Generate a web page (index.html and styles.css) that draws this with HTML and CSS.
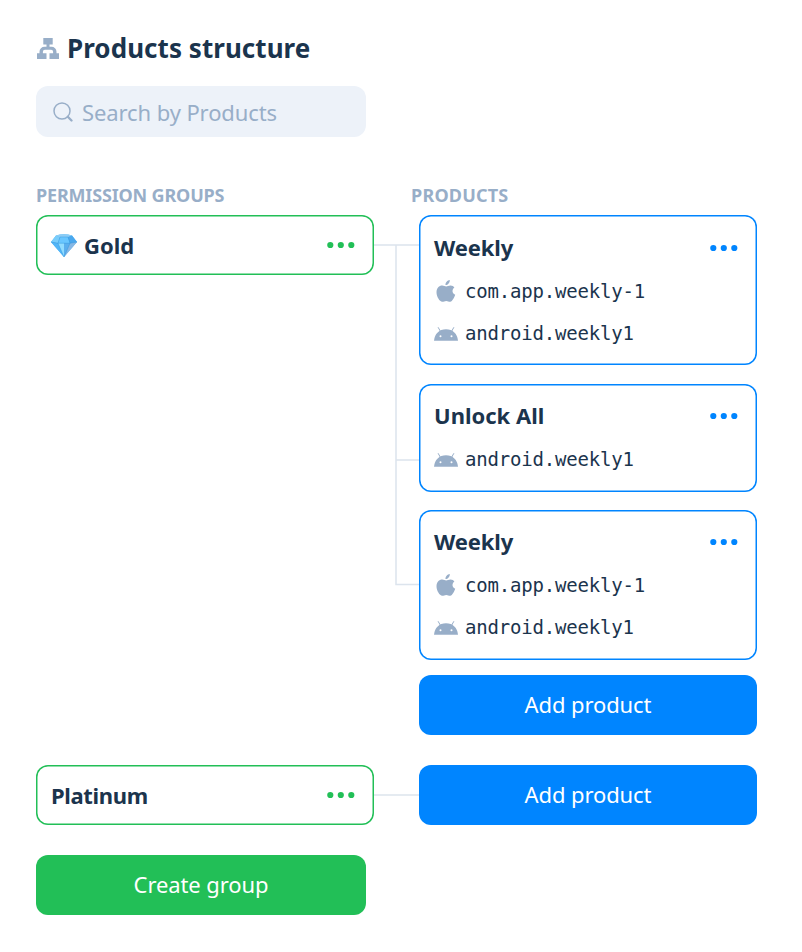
FILE: index.html
```html
<!DOCTYPE html>
<html lang="en">
<head>
<meta charset="utf-8">
<title>Products structure</title>
<link rel="stylesheet" href="styles.css">
</head>
<body>
<svg width="0" height="0" class="defs" aria-hidden="true">
  <symbol id="apple" viewBox="0 0 20 22"><path d="M13.800 0C13.900 2.800 12 5 9.500 5.100 9.300 2.700 11.400 .3 13.800 0zM18.400 7.500C15.800 9.200 15.800 13.200 19.200 14.700 18.500 17.200 16.300 21.500 14.300 21.700 12.700 21.800 12 20.900 10.300 20.900 8.600 20.900 7.800 21.800 6.300 21.800 3.600 21.800.5 16.600.5 12.300.5 8.200 3.200 5.600 6.200 5.600 7.900 5.600 9 6.500 10.200 6.500 11.400 6.500 12.600 5.500 14.600 5.500 16.200 5.600 17.700 6.400 18.400 7.500z" fill="#98aec8"/></symbol>
  <symbol id="android" viewBox="0 0 24 14"><path d="M4.300.6 6.500 4.500M19.700.6 17.500 4.500" stroke="#98aec8" stroke-width="1" stroke-linecap="round"/><path d="M0 13.700C.6 6.900 5.200 2.300 12 2.300s11.400 4.600 12 11.400z" fill="#98aec8"/><circle cx="6.500" cy="9.300" r="1" fill="#fff"/><circle cx="17.500" cy="9.300" r="1" fill="#fff"/></symbol>
  <symbol id="dots" viewBox="0 0 28 8"><circle cx="3.300" cy="4" r="3.100"/><circle cx="13.800" cy="4" r="3.100"/><circle cx="24.300" cy="4" r="3.100"/></symbol>
</svg>
<main class="page">
  <header class="heading">
    <svg class="tree" viewBox="0 0 22 22"><path fill="#98aec8" d="M6.300 0h9.400v6.500H12.500v2.200h2a5 5 0 0 1 5 5V15.200H22V21h-9.500v-5.800h3.600v-1.500a2 2 0 0 0-2-2H7.900a2 2 0 0 0-2 2v1.500h3.600V21H0v-5.800h2.500v-1.500a5 5 0 0 1 5-5h2V6.500H6.300z"/></svg>
    <h1>Products structure</h1>
  </header>
  <div class="search">
    <svg viewBox="0 0 20 20"><circle cx="9" cy="9" r="8" fill="none" stroke="#98aec8" stroke-width="1.500"/><path d="m14.800 14.800 3.700 3.700" stroke="#98aec8" stroke-width="2.300" stroke-linecap="round"/></svg>
    <span>Search by Products</span>
  </div>
  <div class="labels"><span class="label-groups">PERMISSION GROUPS</span><span class="label-products">PRODUCTS</span></div>
  <section class="row gold-row">
    <article class="card group">
      <svg class="gem" viewBox="0 0 26 23">
        <path d="M5 1.500Q13-1 21 1.500L26 8 13 23 0 8z" fill="#4db4f5"/>
        <path d="M5 1.500 0 8l7 1.200L9 3z" fill="#79cdfb"/><path d="M5 1.500Q13-1 21 1.500L17 3.200H9z" fill="#8dcdf5"/><path d="m9 3-2 6.200h12L17 3z" fill="#69c6ff"/><path d="m21 1.500 5 6.500-7 1.200L17 3z" fill="#4aa8ee"/><path d="m0 8 7 1.200L13 23z" fill="#52b5f7"/><path d="M7 9.200h6V23z" fill="#91dcff"/><path d="M13 9.200h6L13 23z" fill="#5bafee"/><path d="M19 9.200 26 8 13 23z" fill="#87b8e5"/>
        <path d="m0 8 7 1.200h12L26 8M7 9.200 9 3h8l2 6.200L13 23z" fill="none" stroke="#3193da" stroke-width=".4"/>
      </svg>
      <h2 class="t-gold">Gold</h2>
      <svg class="dots"><use href="#dots"/></svg>
    </article>
    <svg class="lines" viewBox="0 0 45 520"><path d="M0 30H45M22 30V369.500H45M22 245H45" fill="none" stroke="#dce4ed" stroke-width="1.500"/></svg>
    <div class="products">
      <article class="card product">
        <div class="top"><h2 class="t-weekly">Weekly</h2><svg class="dots"><use href="#dots"/></svg></div>
        <div class="sku"><svg class="apple"><use href="#apple"/></svg><code>com.app.weekly-1</code></div>
        <div class="sku"><svg class="android"><use href="#android"/></svg><code>android.weekly1</code></div>
      </article>
      <article class="card product short">
        <div class="top"><h2 class="t-unlock">Unlock All</h2><svg class="dots"><use href="#dots"/></svg></div>
        <div class="sku"><svg class="android"><use href="#android"/></svg><code>android.weekly1</code></div>
      </article>
      <article class="card product">
        <div class="top"><h2 class="t-weekly">Weekly</h2><svg class="dots"><use href="#dots"/></svg></div>
        <div class="sku"><svg class="apple"><use href="#apple"/></svg><code>com.app.weekly-1</code></div>
        <div class="sku"><svg class="android"><use href="#android"/></svg><code>android.weekly1</code></div>
      </article>
      <button class="btn add">Add product</button>
    </div>
  </section>
  <section class="row">
    <article class="card group"><h2 class="t-platinum">Platinum</h2><svg class="dots"><use href="#dots"/></svg></article>
    <svg class="lines" viewBox="0 0 45 60"><path d="M0 30H45" stroke="#dce4ed" stroke-width="1.500"/></svg>
    <button class="btn">Add product</button>
  </section>
  <button class="btn create">Create group</button>
</main>
</body>
</html>
```
FILE: styles.css
```css
* { box-sizing: border-box; }
body { margin: 0; background: #fff; color: #1b344d; font-family: "Noto Sans", sans-serif; }
h1, h2 { margin: 0; font-weight: 700; white-space: nowrap; }
svg { display: block; flex: none; }
.defs { position: absolute; }
.page { width: 802px; height: 952px; padding: 30px 45px 0 36px; }
.heading { display: flex; align-items: center; height: 36px; }
.tree { width: 22px; height: 22px; margin: 1px 8px 0 1px; }
h1 { font-size: 26px; line-height: 36px; letter-spacing: 0.05px; }
.search { display: flex; align-items: center; width: 330px; height: 51px; margin-top: 20px; padding-left: 17px; border-radius: 12px; background: #edf2f9; color: #98aec8; font-size: 22px; letter-spacing: -0.1px; white-space: nowrap; }
.search svg { width: 20px; height: 20px; margin-right: 9px; }
.labels { display: flex; height: 24px; margin-top: 46px; line-height: 24px; font-size: 18px; font-weight: 700; color: #98aec8; white-space: nowrap; }
.label-groups { width: 375px; letter-spacing: -0.17px; }
.label-products { letter-spacing: 0.2px; }
.row { display: grid; grid-template-columns: 338px 45px 338px; height: 60px; align-items: start; }
.gold-row { height: 520px; margin: 8px 0 30px; }
.lines { width: 45px; height: 100%; }
.card { box-shadow: inset 0 0 0 1.5px currentColor; border-radius: 12px; }
.card h2 { color: #1b344d; font-size: 22px; line-height: 30px; }
.card .t-platinum { letter-spacing: -0.35px; }
.card .t-weekly { letter-spacing: -0.1px; }
.dots { width: 28px; height: 8px; margin-left: auto; fill: currentColor; }
.group { display: flex; align-items: center; height: 60px; padding: 0 19px 0 15px; color: #22bf57; }
.gem { width: 26px; height: 23px; margin-right: 7px; }
.product { height: 150px; padding: 16px 19px 0 15px; margin-bottom: 19px; color: #0085ff; }
.product .dots { margin-top: 2px; }
.short { height: 108px; padding-top: 15px; margin-bottom: 18px; }
.product:nth-child(3) { padding-top: 15px; margin-bottom: 15px; }
.top { display: flex; align-items: center; height: 32px; margin-bottom: 7px; }
.sku { display: flex; align-items: center; height: 42px; color: #1b344d; }
code { font: 19px/24px "DejaVu Sans Mono", monospace; letter-spacing: -0.19px; white-space: nowrap; }
.apple { width: 20px; height: 22px; margin: 0 9px 0 2px; }
.android { width: 24px; height: 14px; margin: 2px 7px 0 0; }
.btn { display: block; width: 338px; height: 60px; border: 0; border-radius: 12px; padding: 0 0 2px; background: #0085ff; color: #fff; font: 22px/30px "Noto Sans", sans-serif; letter-spacing: -0.1px; }
.create { width: 330px; margin-top: 30px; background: #22bf57; }
```
